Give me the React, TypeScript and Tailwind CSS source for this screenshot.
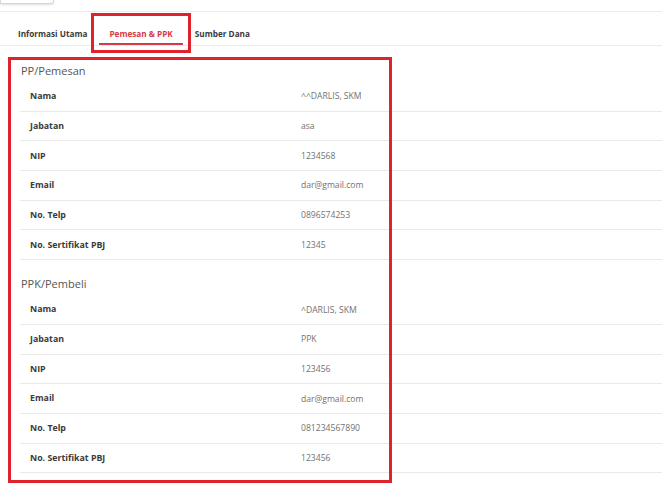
import React from "react";

type Row = { label: string; value: string };

const pemesan: Row[] = [
  { label: "Nama", value: "^^DARLIS, SKM" },
  { label: "Jabatan", value: "asa" },
  { label: "NIP", value: "1234568" },
  { label: "Email", value: "dar@gmail.com" },
  { label: "No. Telp", value: "0896574253" },
  { label: "No. Sertifikat PBJ", value: "12345" },
];

const pembeli: Row[] = [
  { label: "Nama", value: "^DARLIS, SKM" },
  { label: "Jabatan", value: "PPK" },
  { label: "NIP", value: "123456" },
  { label: "Email", value: "dar@gmail.com" },
  { label: "No. Telp", value: "081234567890" },
  { label: "No. Sertifikat PBJ", value: "123456" },
];

function InfoTable({ rows }: { rows: Row[] }) {
  return (
    <div>
      {rows.map((r) => (
        <div
          key={r.label}
          className="grid grid-cols-[271px_1fr] items-center h-[29.7px] pt-[1px] px-[10px] border-b border-[#e9e9e9]"
        >
          <span className="text-[8.8px] font-bold text-[#3a3a3a]">{r.label}</span>
          <span className="text-[8.6px] text-[#727272]">{r.value}</span>
        </div>
      ))}
    </div>
  );
}

export default function App() {
  return (
    <div className="relative w-[669px] h-[486px] bg-white overflow-hidden font-['Open_Sans',sans-serif]">
      {/* potongan tombol di atas */}
      <div className="h-[4px] w-[54px] border border-t-0 border-[#d6d6d6] rounded-br-[3px] shadow-sm" />

      <div className="mt-[7px] w-[662px] border-t border-[#ececec]">
        {/* Tabs */}
        <div className="flex pl-[8px] gap-[2px] border-b border-[#ececec]">
          <div className="px-[10px] pt-[16px] pb-[5px] text-[8.2px] leading-[12px] font-bold text-[#3a3a3a]">
            Informasi Utama
          </div>
          <div className="px-[10px] pt-[16px] pb-[3px] text-[8.2px] leading-[12px] font-bold text-[#d63a44] border-b-2 border-[#d63a44]">
            Pemesan &amp; PPK
          </div>
          <div className="px-[10px] pt-[16px] pb-[5px] text-[8.2px] leading-[12px] font-bold text-[#3a3a3a]">
            Sumber Dana
          </div>
        </div>

        {/* Konten */}
        <div className="pl-[20px]">
          <div className="pt-[17px] pb-[4px] pl-[1px] text-[11px] leading-[15px] text-[#555]">
            PP/Pemesan
          </div>
          <InfoTable rows={pemesan} />
          <div className="pt-[16px] pb-[4px] pl-[1px] text-[11px] leading-[15px] text-[#555]">
            PPK/Pembeli
          </div>
          <InfoTable rows={pembeli} />
        </div>
      </div>

      {/* kotak anotasi merah */}
      <div className="absolute left-[91px] top-[13px] w-[100px] h-[40px] border-[3px] border-[#e0222d]" />
      <div className="absolute left-[8px] top-[57px] w-[384px] h-[426px] border-[3px] border-[#e0222d]" />
    </div>
  );
}
